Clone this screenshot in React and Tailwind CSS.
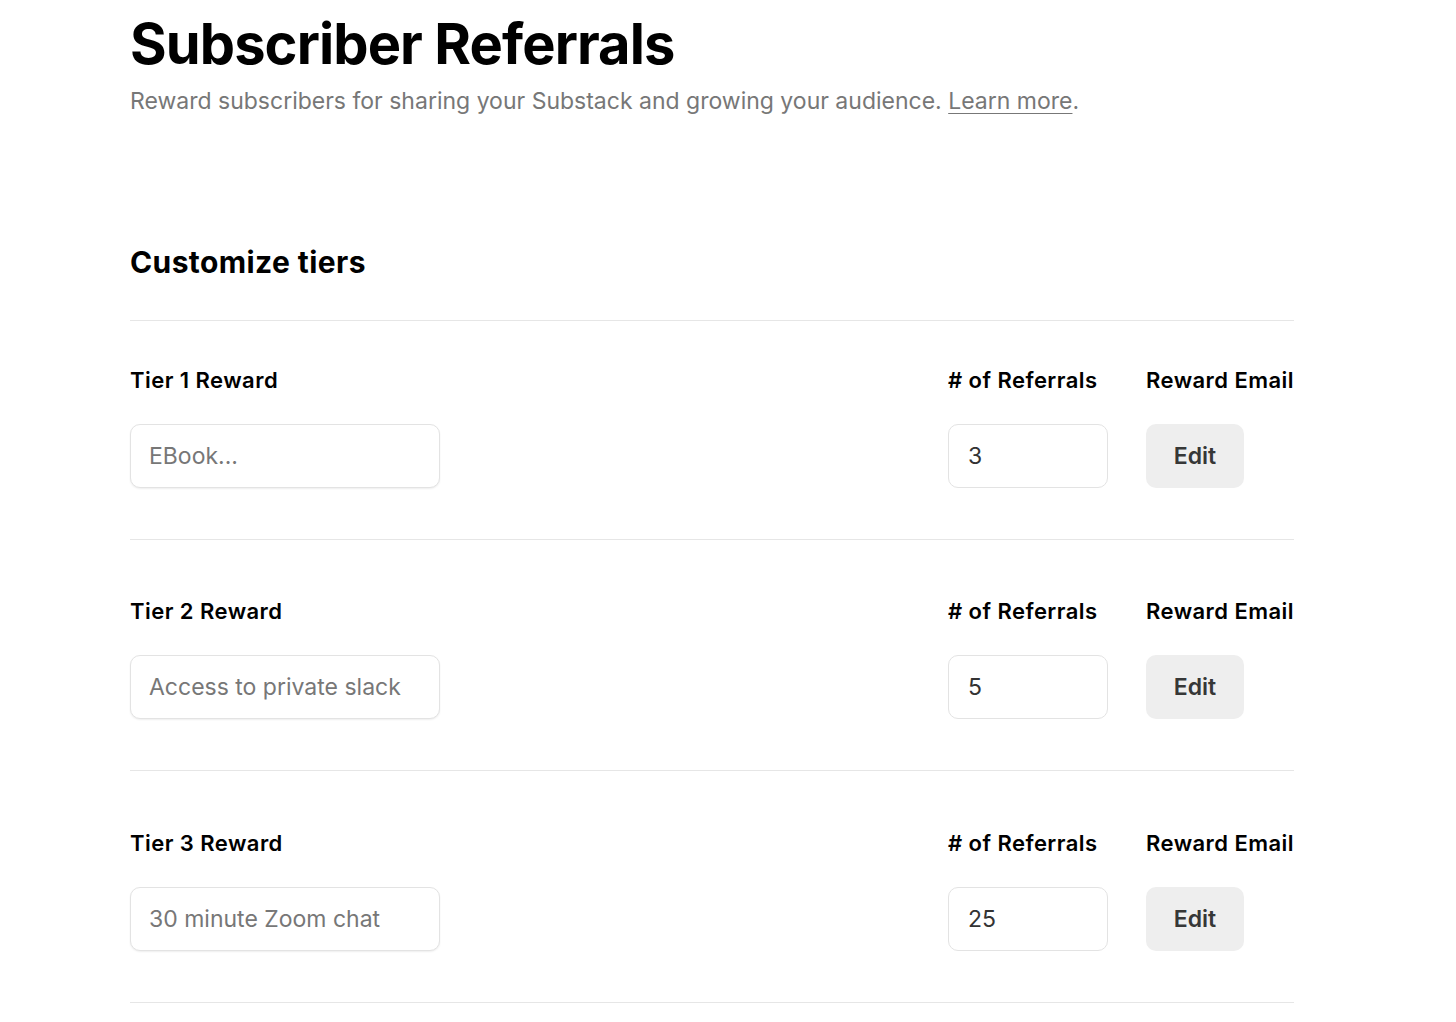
import React from 'react'

const tiers = [
  { id: 1, placeholder: 'EBook...', referrals: '3', pt: 'pt-[46px]' },
  { id: 2, placeholder: 'Access to private slack', referrals: '5', pt: 'pt-[58px]' },
  { id: 3, placeholder: '30 minute Zoom chat', referrals: '25', pt: 'pt-[59px]' },
]

const labelClass =
  'text-[22px] leading-[28px] font-semibold tracking-[0.45px] text-black -translate-y-[1px]'

const TierRow = ({ tier }) => {
  return (
    <div
      className={`grid grid-cols-[1fr_160px_auto] gap-x-[38px] border-b border-[#e6e6e6] pb-[51px] ${tier.pt}`}
    >
      <div className={labelClass}>Tier {tier.id} Reward</div>
      <div className={labelClass}># of Referrals</div>
      <div className={labelClass}>Reward Email</div>

      <div className="mt-[29px]">
        <input
          type="text"
          placeholder={tier.placeholder}
          className="w-[310px] h-[64px] px-[18px] rounded-[10px] border border-[#e3e3e3] bg-white text-[23px] text-[#333] placeholder:text-[#777] shadow-[0_1px_2px_rgba(0,0,0,0.07)] outline-none"
        />
      </div>
      <div className="mt-[29px]">
        <input
          type="text"
          defaultValue={tier.referrals}
          className="w-[160px] h-[64px] px-[19px] rounded-[10px] border border-[#e3e3e3] bg-white text-[23px] text-[#333] outline-none"
        />
      </div>
      <div className="mt-[29px]">
        <button className="w-[98px] h-[64px] rounded-[10px] bg-[#eeeeee] text-[23px] font-semibold text-[#363737]">
          Edit
        </button>
      </div>
    </div>
  )
}

export default function App() {
  return (
    <div className="min-h-screen bg-white font-['Inter',sans-serif]">
      <div className="w-[1164px] ml-[130px] pt-[9px]">
        <h1 className="text-[56px] leading-[70px] font-bold text-black tracking-[-0.9px]">
          Subscriber Referrals
        </h1>
        <p className="mt-[6px] text-[23px] leading-[33px] text-[#777]">
          Reward subscribers for sharing your Substack and growing your audience.{' '}
          <a href="#" className="underline decoration-1 underline-offset-[4px]">
            Learn more
          </a>
          .
        </p>

        <h2 className="mt-[126px] text-[30px] leading-[36px] font-bold tracking-[0.4px] text-black pb-[40px] border-b border-[#e6e6e6]">
          Customize tiers
        </h2>

        {tiers.map((tier) => (
          <TierRow key={tier.id} tier={tier} />
        ))}
      </div>
    </div>
  )
}
